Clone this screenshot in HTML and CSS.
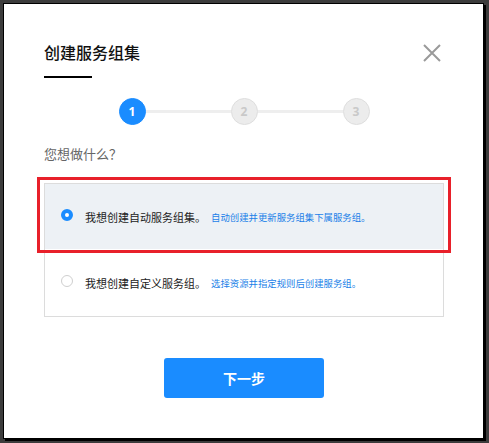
FILE: index.html
```html
<!DOCTYPE html>
<html lang="zh-CN">
<head>
<meta charset="utf-8">
<title>创建服务组集</title>
<link rel="stylesheet" href="styles.css">
</head>
<body>
<div class="modal">
  <div class="header">
    <div class="title-block">
      <h1 class="title">创建服务组集</h1>
      <div class="title-bar"></div>
    </div>
    <svg class="close" width="18" height="18" viewBox="0 0 18 18" aria-label="关闭">
      <path d="M1 1 L17 17 M17 1 L1 17" stroke="#9a9a9a" stroke-width="2" fill="none"/>
    </svg>
  </div>

  <div class="steps">
    <div class="step step-active">1</div>
    <div class="step-line"></div>
    <div class="step">2</div>
    <div class="step-line"></div>
    <div class="step">3</div>
  </div>

  <p class="question">您想做什么？</p>

  <div class="options">
    <div class="annotation"></div>
    <div class="option option-selected">
      <span class="radio radio-on"></span>
      <span class="opt-label">我想创建自动服务组集。</span>
      <span class="opt-desc">自动创建并更新服务组集下属服务组。</span>
    </div>
    <div class="option">
      <span class="radio"></span>
      <span class="opt-label">我想创建自定义服务组。</span>
      <span class="opt-desc">选择资源并指定规则后创建服务组。</span>
    </div>
  </div>

  <div class="footer">
    <button class="btn-next">下一步</button>
  </div>
</div>
</body>
</html>
```

FILE: styles.css
```css
html, body {
  margin: 0;
  padding: 0;
}
body {
  background: #3c3c3c;
  font-family: "Noto Sans CJK SC", "Noto Sans", sans-serif;
  width: 489px;
  height: 443px;
  overflow: hidden;
}
.modal {
  margin: 3px 0 0 3px;
  width: 479px;
  box-sizing: content-box;
  background: #fff;
  border: 1px solid #000;
  box-shadow: 2px 2px 0 #000;
  padding: 0;
}
.modal > * {
  margin-left: 40px;
  margin-right: 39px;
}
.header {
  display: flex;
  justify-content: space-between;
  align-items: flex-start;
  padding-top: 36px;
}
.title {
  margin: 0;
  font-size: 16px;
  line-height: 24px;
  font-weight: 500;
  color: #111;
}
.title-bar {
  margin-top: 12px;
  width: 48px;
  height: 2px;
  background: #000;
}
.close {
  margin-top: 4px;
  margin-right: 3px;
  display: block;
}
.steps {
  margin-top: 20px;
  display: flex;
  justify-content: center;
  align-items: center;
  height: 27px;
}
.step {
  width: 27px;
  height: 27px;
  box-sizing: border-box;
  border-radius: 50%;
  background: #ececec;
  border: 1px solid #dedede;
  color: #c9c9c9;
  font-family: "Open Sans", "Noto Sans", sans-serif;
  font-weight: 700;
  font-size: 12px;
  display: flex;
  align-items: center;
  justify-content: center;
}
.step-active {
  background: #1a8cff;
  border-color: #1a8cff;
  color: #fff;
}
.step-line {
  width: 85px;
  height: 3px;
  background: #eeeeee;
}
.question {
  margin-top: 19px;
  margin-bottom: 0;
  font-size: 13px;
  line-height: 20px;
  color: #666;
}
.options {
  position: relative;
  margin-top: 19px;
  border: 1px solid #dcdcdc;
}
.annotation {
  position: absolute;
  left: -8px;
  top: -7px;
  width: 414px;
  height: 76px;
  box-sizing: border-box;
  border: 3px solid #e8202a;
  pointer-events: none;
}
.option {
  height: 65px;
  display: flex;
  align-items: center;
  padding-left: 16px;
  background: #fff;
}
.option + .option {
  height: 67px;
}
.option-selected {
  background: #edf1f5;
}
.radio {
  width: 12px;
  height: 12px;
  box-sizing: border-box;
  border-radius: 50%;
  border: 1px solid #cfcfcf;
  background: #fff;
  margin-top: -3px;
  flex: none;
  position: relative;
}
.radio-on {
  border: 4px solid #1a8cff;
  background: #fff;
}
.opt-label {
  margin-left: 12px;
  font-size: 11px;
  color: #222;
  line-height: 16px;
}
.opt-desc {
  margin-left: 5px;
  font-size: 9.4px;
  color: #1a7fe8;
  line-height: 16px;
}
.footer {
  display: flex;
  justify-content: center;
  margin-top: 41px;
  padding-bottom: 40px;
}
.btn-next {
  width: 160px;
  height: 40px;
  border: none;
  border-radius: 3px;
  background: #1a8cff;
  color: #fff;
  font-family: "Noto Sans CJK SC", "Noto Sans", sans-serif;
  font-size: 14px;
  font-weight: 700;
  padding: 0;
}
```
